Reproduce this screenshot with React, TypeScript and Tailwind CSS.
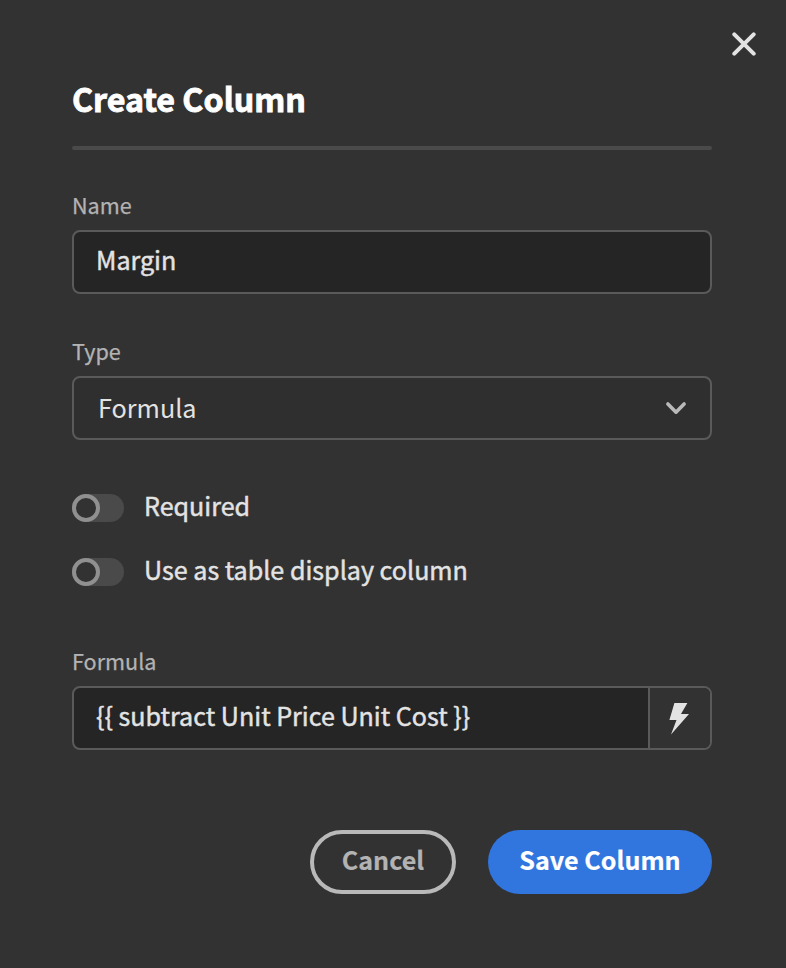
import type { ReactNode } from "react";

const font = "font-['Noto_Sans_CJK_SC','Noto_Sans_CJK_JP','Noto_Sans',sans-serif]";

function Label({ children }: { children: ReactNode }) {
  return (
    <div className="flex h-[30px] items-center text-[21.6px] leading-[30px] text-[#b3b3b3] [-webkit-text-stroke:0.25px_#b3b3b3]">
      <span>{children}</span>
    </div>
  );
}

function Toggle({ children }: { children: ReactNode }) {
  return (
    <label className="flex h-8 items-center gap-5">
      <span className="flex h-7 w-[52px] rounded-full bg-[#4a4a4a]">
        <span className="size-7 rounded-full border-4 border-[#909090] bg-[#323232]" />
      </span>
      <span className="-mt-1.5 text-[25.1px] leading-8 text-[#e3e3e3] [-webkit-text-stroke:0.45px_#e3e3e3]">{children}</span>
    </label>
  );
}

export default function App() {
  return (
    <div className={`flex h-[968px] w-[786px] flex-col bg-[#323232] ${font}`}>
      <div className="flex h-[60px] shrink-0 items-end justify-end pr-[30px]">
        <button aria-label="Close" className="mb-1 size-6">
          <svg viewBox="0 0 24 24" className="size-6" fill="none" stroke="#e3e3e3" strokeWidth="4" strokeLinecap="round">
            <path d="M2.3 2.3 21.7 21.7M21.7 2.3 2.3 21.7" />
          </svg>
        </button>
      </div>

      <div className="flex flex-col pr-[74px] pl-[72px]">
        <h1 className="mt-[14px] h-[48px] text-[32.2px] leading-[48px] font-bold text-white [-webkit-text-stroke:0.9px_#fff]">
          <span>Create Column</span>
        </h1>
        <div className="mt-6 h-1 rounded-full bg-[#4a4a4a]" />

        <div className="mt-[40px]">
          <Label>Name</Label>
        </div>
        <div className="mt-[10px] flex h-16 items-center rounded-lg border-2 border-[#5a5a5a] bg-[#252525] px-[22px] pb-[6px] text-[25.1px] leading-8 text-[#e3e3e3] [-webkit-text-stroke:0.45px_#e3e3e3]">
          <span>Margin</span>
        </div>

        <div className="mt-[42px]">
          <Label>Type</Label>
        </div>
        <div className="mt-[10px] flex h-16 items-center justify-between rounded-lg border-2 border-[#5a5a5a] bg-[#2f2f2f] pr-[24px] pl-6 text-[25.2px] leading-8 text-[#e3e3e3]">
          <span className="-mt-[2px]">Formula</span>
          <svg viewBox="0 0 20 12" className="h-3 w-5 overflow-visible" fill="none" stroke="#b9b9b9" strokeWidth="3.6" strokeLinecap="round" strokeLinejoin="round">
            <path d="M1.9 2 10 10.2 18.1 2" />
          </svg>
        </div>

        <div className="mt-[52px] flex flex-col gap-8">
          <Toggle>Required</Toggle>
          <Toggle>Use as table display column</Toggle>
        </div>

        <div className="mt-[58px]">
          <Label>Formula</Label>
        </div>
        <div className="mt-[10px] flex h-16 overflow-hidden rounded-lg border-2 border-[#5a5a5a] bg-[#252525] text-[25.1px] leading-8 text-[#e3e3e3] [-webkit-text-stroke:0.45px_#e3e3e3]">
          <div className="flex flex-1 items-center pb-[6px] pl-[22px]">
            <span>{"{{ subtract Unit Price Unit Cost }}"}</span>
          </div>
          <button aria-label="Edit formula" className="flex w-[62px] items-center justify-center border-l-2 border-[#5a5a5a] bg-[#323232]">
            <svg viewBox="0 0 20 32" className="h-8 w-5 overflow-visible" fill="#e3e3e3">
              <path d="M4.4 1H17.4L11 12H19L1 32.5 6.5 18H-.6Z" />
            </svg>
          </button>
        </div>

        <div className="mt-20 flex justify-end gap-8 text-[25.1px] leading-8 font-bold">
          <button className="flex h-16 w-[146px] items-center justify-center rounded-full border-4 border-[#b9b9b9] pb-[6px] text-[#b3b3b3] [-webkit-text-stroke:0.2px_#b3b3b3]">
            <span>Cancel</span>
          </button>
          <button className="flex h-16 w-[224px] items-center justify-center rounded-full bg-[#3175df] pb-[6px] text-white [-webkit-text-stroke:0.2px_#fff]">
            <span>Save Column</span>
          </button>
        </div>
      </div>
    </div>
  );
}
